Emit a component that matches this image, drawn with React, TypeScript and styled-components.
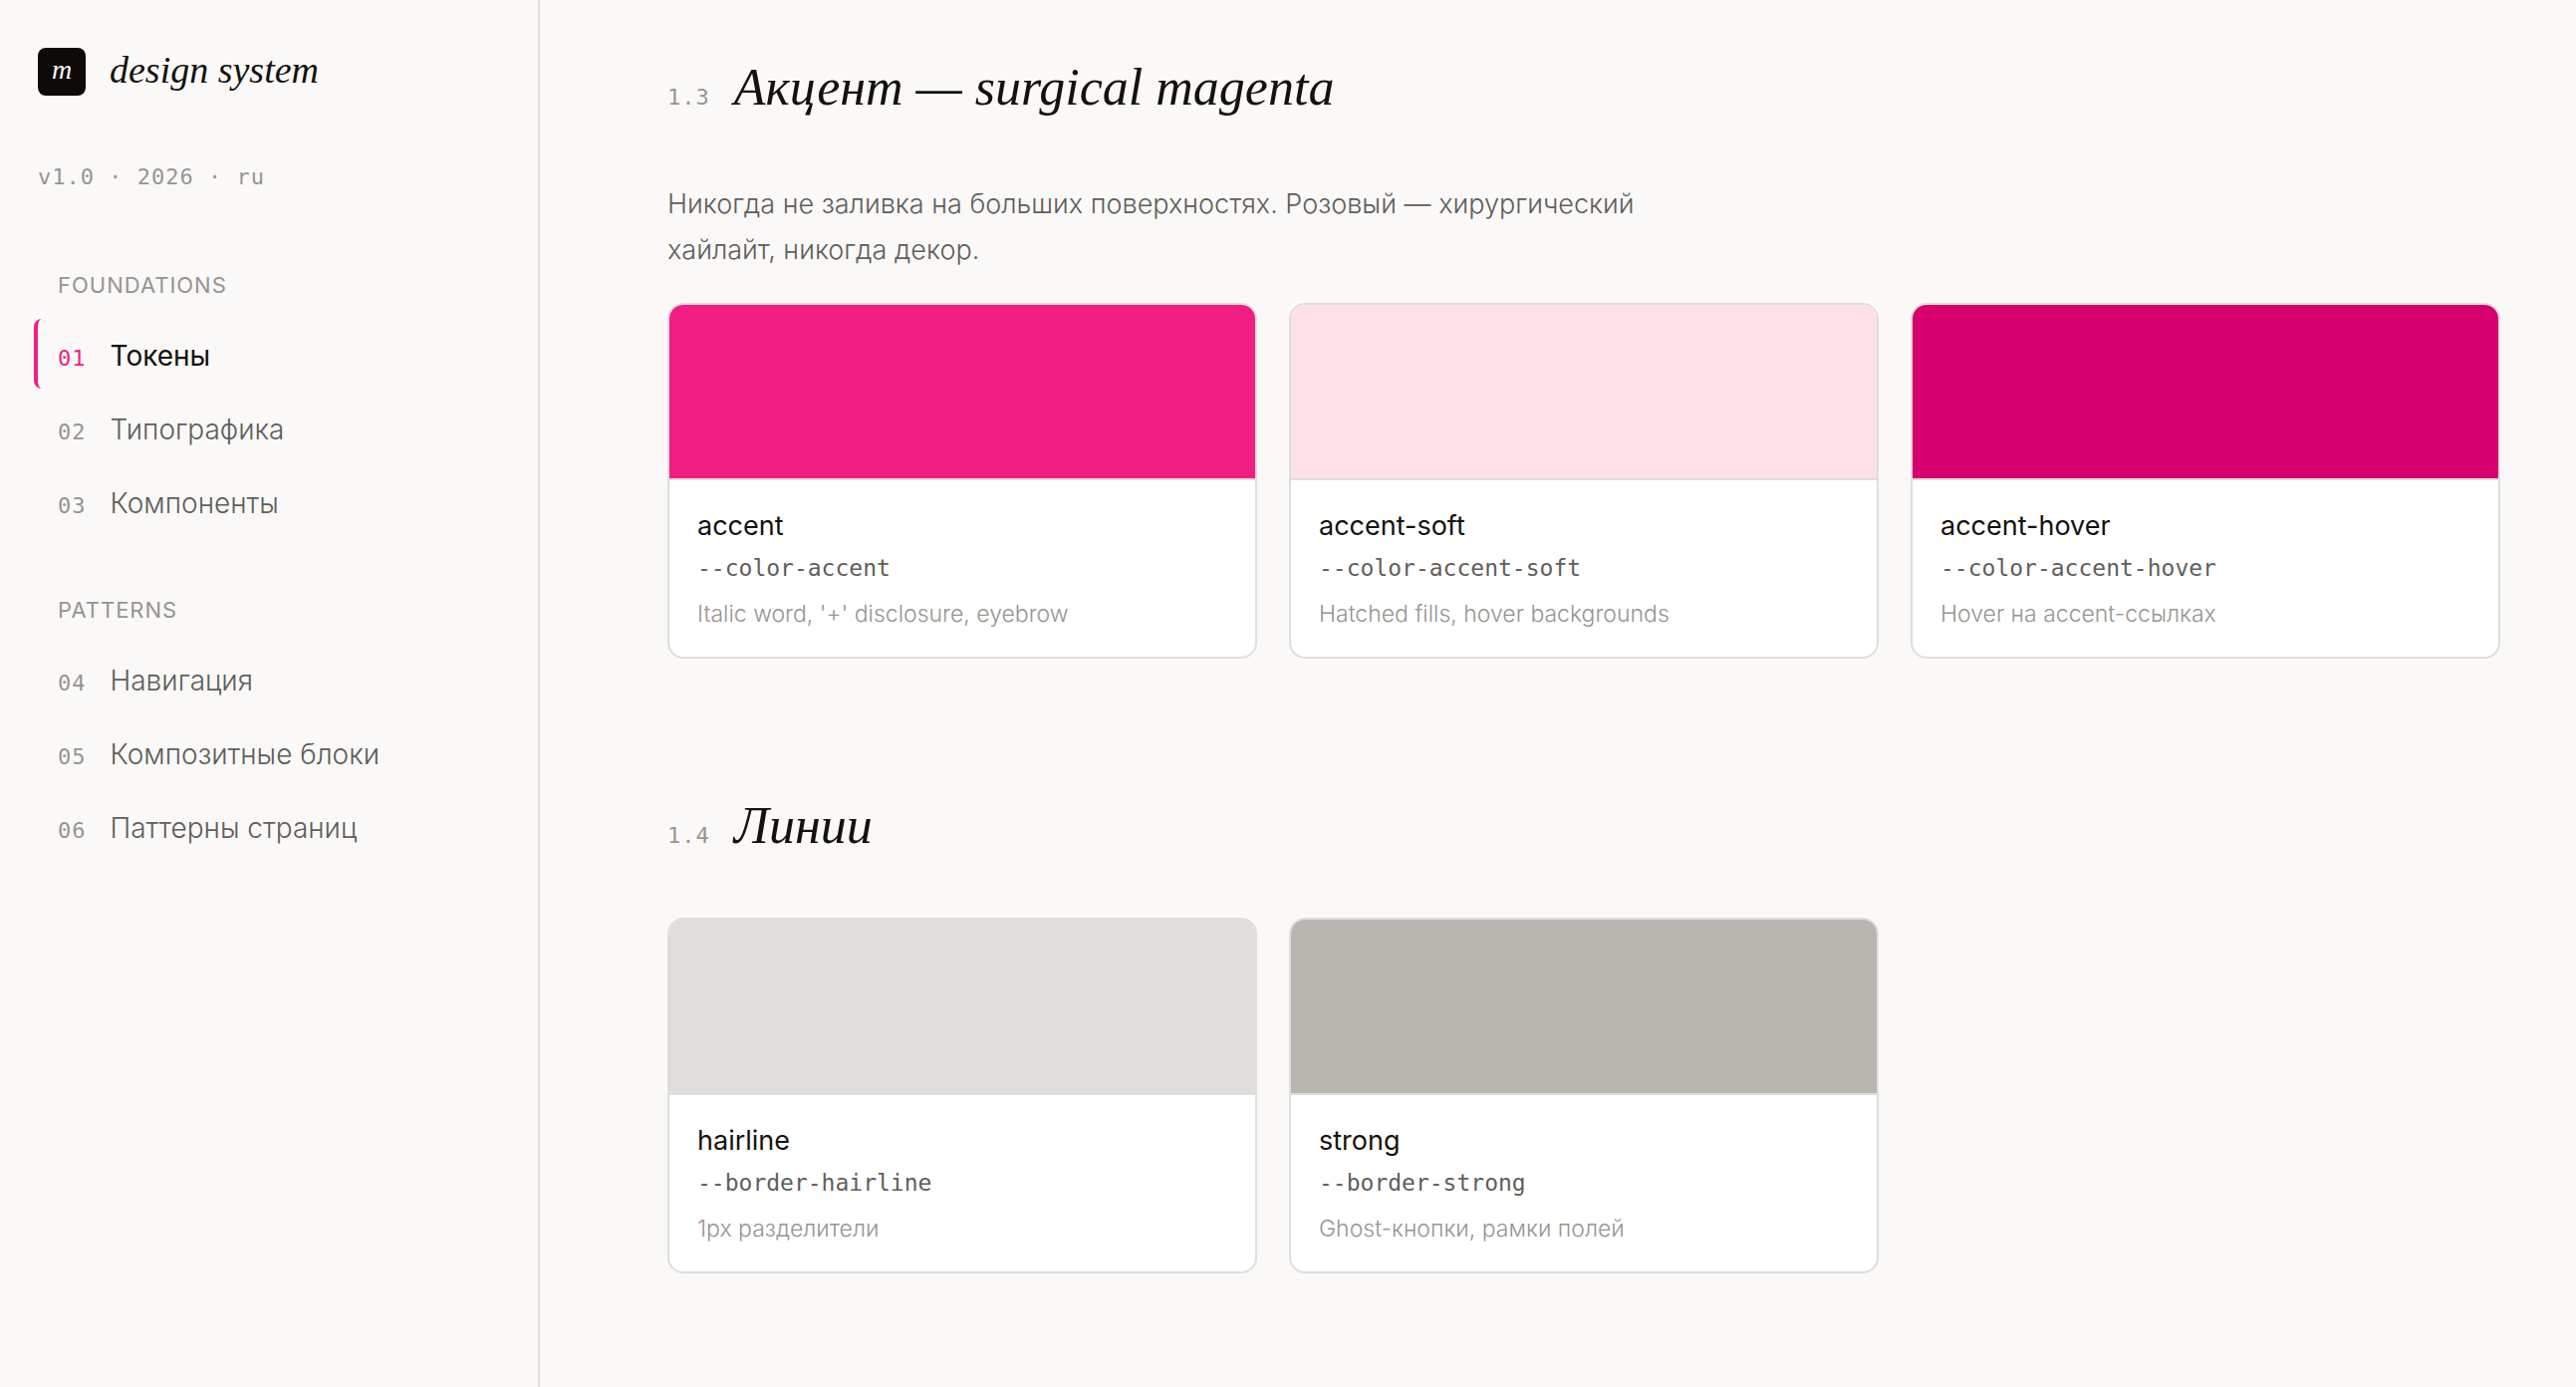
import React, { Component } from 'react';
import styled, { createGlobalStyle } from 'styled-components';

const sans = `Inter, 'Noto Sans', sans-serif`;
const serif = `'Liberation Serif', 'Noto Serif', serif`;
const mono = `'DejaVu Sans Mono', 'Liberation Mono', monospace`;

const ink = '#14120f';
const muted = '#5f5e5b';
const faint = '#969592';
const hairline = '#dfdedb';
const accent = '#f01e82';

const GlobalStyle = createGlobalStyle`
  * {
    box-sizing: border-box;
  }

  body {
    margin: 0;
    background: #faf9f7;
    color: ${ink};
    font-family: ${sans};
    -webkit-font-smoothing: antialiased;
  }
`;

const Layout = styled.div`
  display: flex;
  min-height: 100vh;
`;

const Sidebar = styled.aside`
  flex: 0 0 542px;
  padding: 48px 34px;
  border-right: 2px solid ${hairline};
`;

const Brand = styled.a`
  display: flex;
  align-items: flex-start;
  gap: 24px;
  padding-left: 4px;
  color: ${ink};
  font-family: ${serif};
  font-style: italic;
  font-size: 38px;
  line-height: 44px;
  text-decoration: none;
`;

const Mark = styled.span`
  width: 48px;
  height: 48px;
  border-radius: 8px;
  background: #0d0a07;
  color: #faf9f7;
  font-size: 28px;
  text-align: center;
`;

const Version = styled.p`
  margin: 66px 0 0;
  padding-left: 4px;
  color: ${faint};
  font-family: ${mono};
  font-size: 22px;
  line-height: 32px;
  letter-spacing: 1px;
`;

const Nav = styled.nav`
  display: flex;
  flex-direction: column;
  gap: 58px;
  margin-top: 76px;
`;

const GroupTitle = styled.h2`
  margin: 0 0 18px;
  padding-left: 24px;
  color: ${faint};
  font-size: 22px;
  font-weight: 400;
  line-height: 32px;
  letter-spacing: 1px;
  text-transform: uppercase;
`;

const NavList = styled.ul`
  display: flex;
  flex-direction: column;
  gap: 4px;
  margin: 0;
  padding: 0;
  list-style: none;
`;

const NavNumber = styled.span`
  color: ${faint};
  font-family: ${mono};
  font-size: 22px;
  line-height: 32px;
  letter-spacing: 1px;
`;

const NavLink = styled.a<{ $active?: boolean }>`
  display: flex;
  align-items: baseline;
  gap: 24px;
  padding: 16px 20px 12px;
  border-left: 4px solid ${p => (p.$active ? accent : 'transparent')};
  border-radius: 8px;
  color: ${p => (p.$active ? ink : muted)};
  font-size: 28px;
  font-weight: ${p => (p.$active ? 400 : 300)};
  line-height: 42px;
  text-decoration: none;

  ${NavNumber} {
    color: ${p => (p.$active ? accent : faint)};
  }
`;

const Main = styled.main`
  flex: 1;
  min-width: 0;
  display: flex;
  flex-direction: column;
  gap: 134px;
  padding: 54px 76px 112px 128px;
`;

const SectionHead = styled.header`
  display: flex;
  align-items: baseline;
  gap: 24px;
`;

const SectionNumber = styled.span`
  color: ${faint};
  font-family: ${mono};
  font-size: 22px;
  letter-spacing: 1px;
`;

const SectionTitle = styled.h3`
  margin: 0;
  font-family: ${serif};
  font-style: italic;
  font-size: 52px;
  font-weight: 400;
  line-height: 68px;
`;

const Lead = styled.p`
  max-width: 1040px;
  margin: 60px 0 0;
  color: ${muted};
  font-size: 27px;
  font-weight: 300;
  line-height: 46px;
`;

const Grid = styled.div<{ $top: number }>`
  display: grid;
  grid-template-columns: repeat(3, 1fr);
  gap: 32px;
  margin-top: ${p => p.$top}px;
`;

const Card = styled.article`
  overflow: hidden;
  border: 2px solid ${hairline};
  border-radius: 16px;
  background: white;
`;

const Swatch = styled.div<{ $color: string }>`
  height: 176px;
  border-bottom: 2px solid ${hairline};
  background: ${p => p.$color};
`;

const CardBody = styled.div`
  padding: 26px 28px 25px;
`;

const TokenName = styled.h4`
  margin: 0;
  font-size: 27px;
  font-weight: 400;
  line-height: 40px;
`;

const TokenVar = styled.code`
  display: block;
  margin-top: 4px;
  color: ${muted};
  font-family: ${mono};
  font-size: 23px;
  line-height: 36px;
`;

const TokenUse = styled.p`
  margin: 10px 0 0;
  color: ${faint};
  font-size: 23px;
  font-weight: 300;
  line-height: 36px;
`;

interface IToken {
  name: string;
  variable: string;
  use: string;
  color: string;
}

interface ISection {
  number: string;
  title: string;
  lead?: string;
  tokens: IToken[];
}

const groups = [
  {
    title: 'Foundations',
    items: [
      { number: '01', label: 'Токены' },
      { number: '02', label: 'Типографика' },
      { number: '03', label: 'Компоненты' }
    ]
  },
  {
    title: 'Patterns',
    items: [
      { number: '04', label: 'Навигация' },
      { number: '05', label: 'Композитные блоки' },
      { number: '06', label: 'Паттерны страниц' }
    ]
  }
];

const sections: ISection[] = [
  {
    number: '1.3',
    title: 'Акцент — surgical magenta',
    lead:
      'Никогда не заливка на больших поверхностях. Розовый — хирургический хайлайт, никогда декор.',
    tokens: [
      {
        name: 'accent',
        variable: '--color-accent',
        use: `Italic word, '+' disclosure, eyebrow`,
        color: accent
      },
      {
        name: 'accent-soft',
        variable: '--color-accent-soft',
        use: 'Hatched fills, hover backgrounds',
        color: '#fee1e8'
      },
      {
        name: 'accent-hover',
        variable: '--color-accent-hover',
        use: 'Hover на accent-ссылках',
        color: '#d6006f'
      }
    ]
  },
  {
    number: '1.4',
    title: 'Линии',
    tokens: [
      {
        name: 'hairline',
        variable: '--border-hairline',
        use: '1px разделители',
        color: '#dfdeda'
      },
      {
        name: 'strong',
        variable: '--border-strong',
        use: 'Ghost-кнопки, рамки полей',
        color: '#b8b6b1'
      }
    ]
  }
];

class App extends Component<{}, { active: string }> {
  state = {
    active: '01'
  };

  public render() {
    const { active } = this.state;

    return (
      <Layout>
        <GlobalStyle />
        <Sidebar>
          <Brand href="#top">
            <Mark>m</Mark>
            design system
          </Brand>
          <Version>v1.0 · 2026 · ru</Version>
          <Nav>
            {groups.map(group => (
              <div key={group.title}>
                <GroupTitle>{group.title}</GroupTitle>
                <NavList>
                  {group.items.map(item => (
                    <li key={item.number}>
                      <NavLink
                        href={`#${item.number}`}
                        $active={item.number === active}
                        onClick={() => this.setActive(item.number)}
                      >
                        <NavNumber>{item.number}</NavNumber>
                        {item.label}
                      </NavLink>
                    </li>
                  ))}
                </NavList>
              </div>
            ))}
          </Nav>
        </Sidebar>
        <Main>
          {sections.map(section => (
            <section key={section.number}>
              <SectionHead>
                <SectionNumber>{section.number}</SectionNumber>
                <SectionTitle>{section.title}</SectionTitle>
              </SectionHead>
              {section.lead && <Lead>{section.lead}</Lead>}
              <Grid $top={section.lead ? 30 : 58}>
                {section.tokens.map(token => (
                  <Card key={token.name}>
                    <Swatch $color={token.color} />
                    <CardBody>
                      <TokenName>{token.name}</TokenName>
                      <TokenVar>{token.variable}</TokenVar>
                      <TokenUse>{token.use}</TokenUse>
                    </CardBody>
                  </Card>
                ))}
              </Grid>
            </section>
          ))}
        </Main>
      </Layout>
    );
  }

  setActive = (active: string) => {
    this.setState({ active });
  };
}

export default App;
